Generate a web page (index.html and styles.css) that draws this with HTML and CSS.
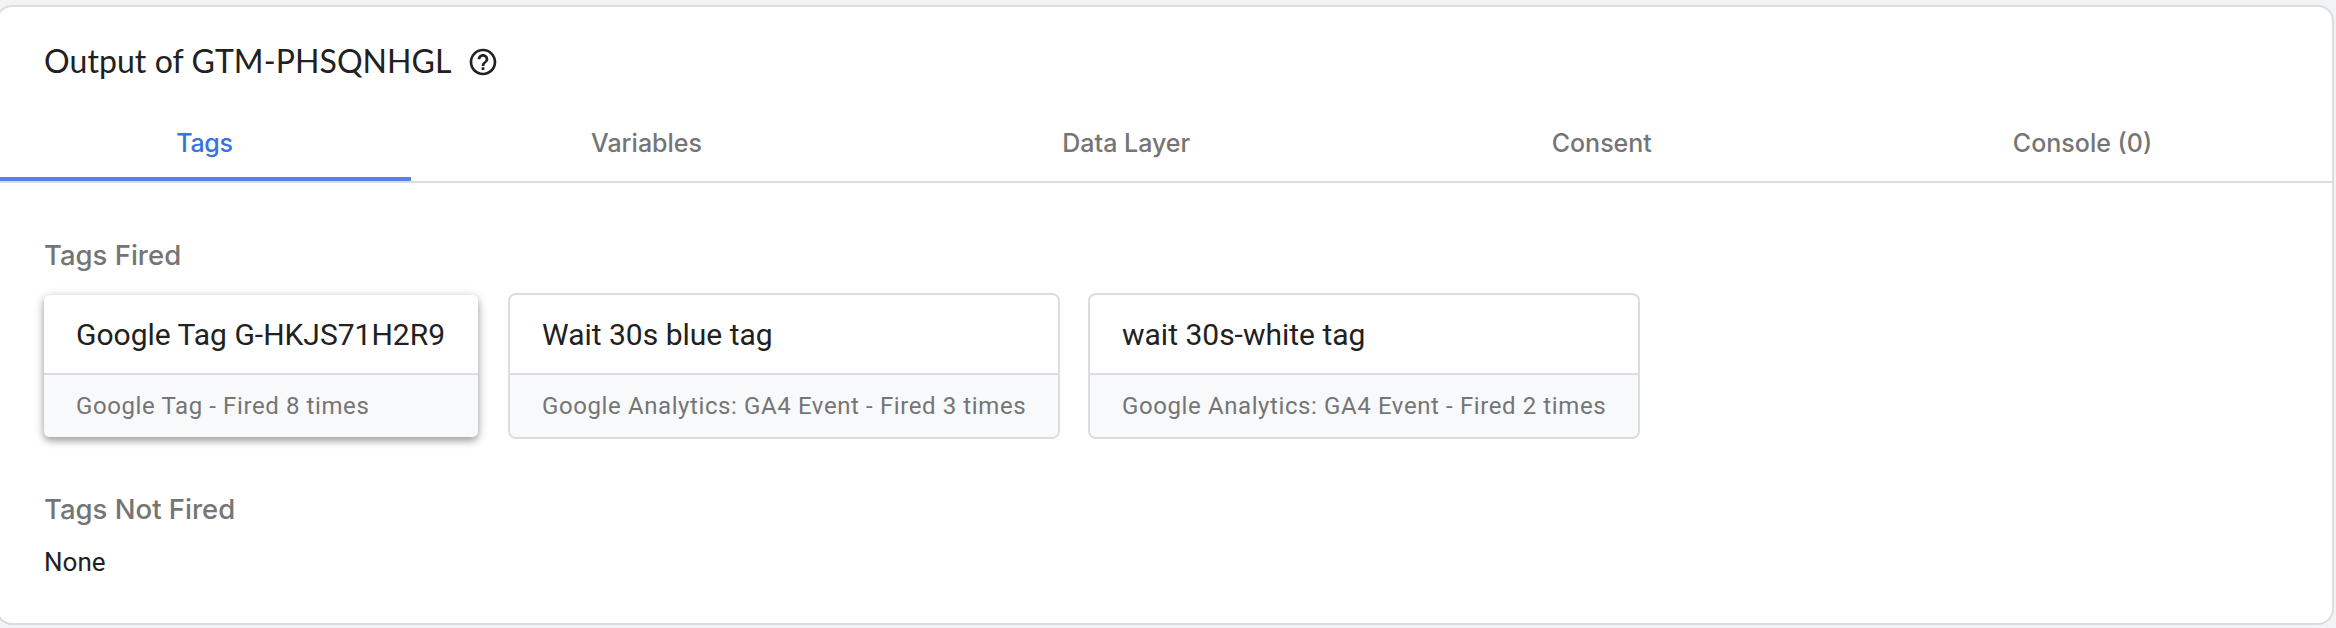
FILE: index.html
```html
<!DOCTYPE html>
<html lang="en">
<head>
<meta charset="utf-8">
<title>Output of GTM-PHSQNHGL</title>
<link rel="stylesheet" href="styles.css">
</head>
<body>
<main class="panel">
  <header class="panel-header">
    <h1 class="title">Output of GTM-PHSQNHGL</h1>
    <svg class="help" viewBox="0 0 24 24" aria-label="Help"><path d="M11 18h2v-2h-2v2zm1-16C6.48 2 2 6.48 2 12s4.480 10 10 10 10-4.480 10-10S17.520 2 12 2zm0 18c-4.410 0-8-3.590-8-8s3.590-8 8-8 8 3.590 8 8-3.590 8-8 8zm0-14c-2.210 0-4 1.790-4 4h2c0-1.100.9-2 2-2s2 .9 2 2c0 2-3 1.750-3 5h2c0-2.250 3-2.500 3-5 0-2.210-1.790-4-4-4z"/></svg>
  </header>
  <nav class="tabs">
    <a class="tab active">Tags</a>
    <a class="tab">Variables</a>
    <a class="tab">Data Layer</a>
    <a class="tab">Consent</a>
    <a class="tab">Console (0)</a>
  </nav>
  <section class="content">
    <h2 class="group-title">Tags Fired</h2>
    <div class="cards">
      <article class="card raised">
        <div class="card-name">Google Tag G-HKJS71H2R9</div>
        <div class="card-info">Google Tag - Fired 8 times</div>
      </article>
      <article class="card">
        <div class="card-name">Wait 30s blue tag</div>
        <div class="card-info">Google Analytics: GA4 Event - Fired 3 times</div>
      </article>
      <article class="card">
        <div class="card-name">wait 30s-white tag</div>
        <div class="card-info">Google Analytics: GA4 Event - Fired 2 times</div>
      </article>
    </div>
    <h2 class="group-title">Tags Not Fired</h2>
    <p class="none">None</p>
  </section>
</main>
</body>
</html>
```
FILE: styles.css
```css
* { box-sizing: border-box; }

body {
  margin: 0;
  height: 628px;
  overflow: hidden;
  background: #f1f3f4;
  color: #212121;
  font-family: Roboto, sans-serif;
}

.panel {
  width: 2338px;
  height: 620px;
  margin: 5px 0 0 -4px;
  background: #fff;
  border: 2px solid #dadce0;
  border-radius: 16px;
  overflow: hidden;
}

.panel-header {
  display: flex;
  align-items: center;
  height: 108px;
  padding-left: 46px;
}

.title {
  margin: 0;
  font: 400 32px/40px Lato, sans-serif;
  letter-spacing: .08px;
}

.help {
  width: 32px;
  height: 32px;
  margin: 2px 0 0 15px;
  fill: #212121;
}

.tabs {
  display: grid;
  grid-template-columns: 413fr 471fr 488.5fr 462.5fr 499fr;
  height: 68px;
  border-bottom: 2px solid #dadce0;
}

.tab {
  height: 66px;
  padding-top: 12px;
  border-bottom: 4px solid transparent;
  color: #757575;
  font: 500 25px/32px Inter, sans-serif;
  text-align: center;
}

.tab.active {
  color: #3872e0;
  border-bottom-color: #5383ec;
  letter-spacing: -.3px;
}

.content { padding: 54px 46px 0; }

.group-title {
  margin: 0;
  color: #757575;
  font: 500 27.5px/36px Inter, sans-serif;
}

.cards {
  display: flex;
  gap: 28px;
  margin: 20px 0 52px -2px;
}

.card {
  width: 552px;
  height: 146px;
  border: 2px solid #dadce0;
  border-radius: 8px;
  overflow: hidden;
}

.card.raised {
  width: 434px;
  height: 142px;
  margin: 2px;
  border: 0;
  border-radius: 6px;
  box-shadow: 0 2px 12px rgba(0, 0, 0, .2), 0 4px 7px rgba(0, 0, 0, .26);
}

.card-name {
  height: 80px;
  padding-left: 32px;
  border-bottom: 2px solid #dadce0;
  font-size: 30px;
  line-height: 79px;
}

.card-info {
  height: 62px;
  padding-left: 32px;
  background: #f8f9fb;
  color: #757575;
  font-size: 24px;
  line-height: 62px;
  letter-spacing: .6px;
  white-space: nowrap;
}

.none {
  margin: 17px 0 0;
  font-size: 26px;
  line-height: 36px;
}
```
